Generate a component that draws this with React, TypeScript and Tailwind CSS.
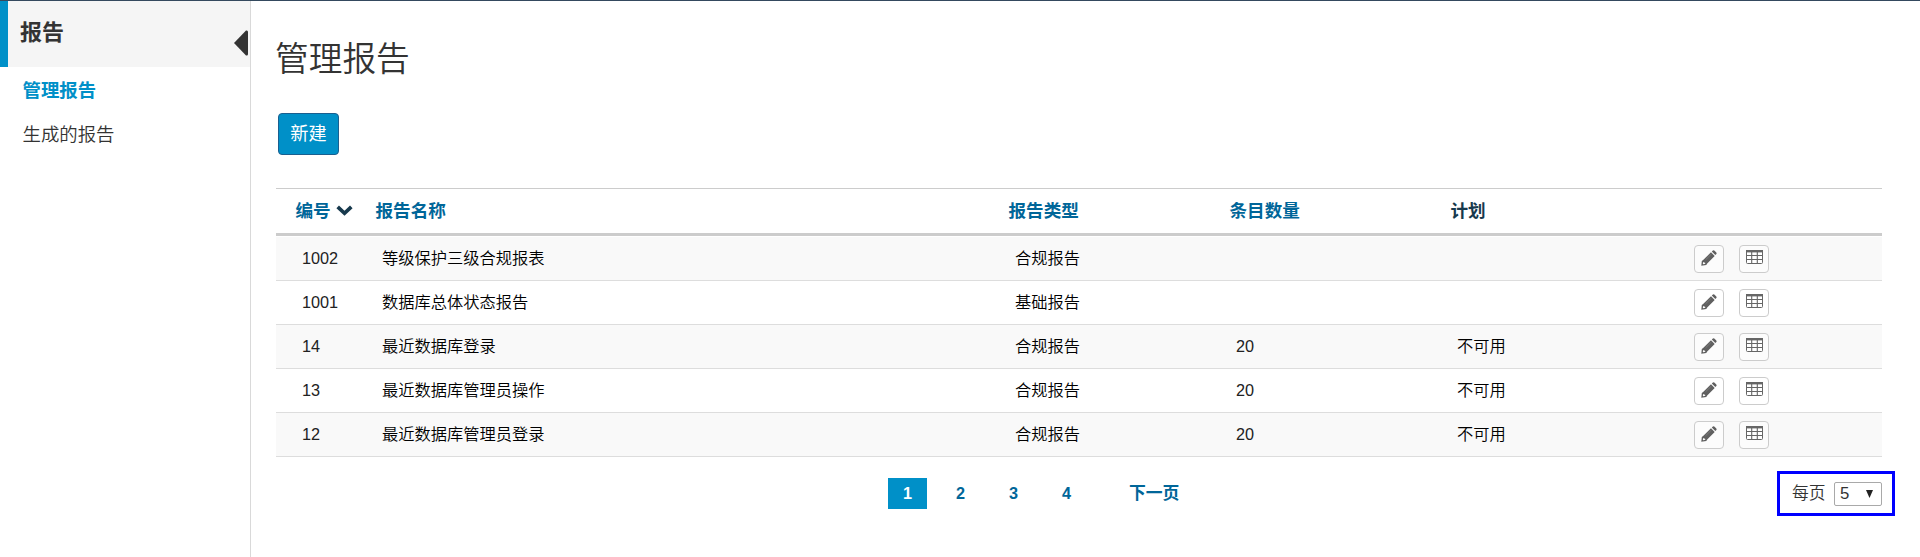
import React from "react";

type Report = { id: string; name: string; type: string; count?: string; plan?: string };

const reports: Report[] = [
  { id: "1002", name: "等级保护三级合规报表", type: "合规报告" },
  { id: "1001", name: "数据库总体状态报告", type: "基础报告" },
  { id: "14", name: "最近数据库登录", type: "合规报告", count: "20", plan: "不可用" },
  { id: "13", name: "最近数据库管理员操作", type: "合规报告", count: "20", plan: "不可用" },
  { id: "12", name: "最近数据库管理员登录", type: "合规报告", count: "20", plan: "不可用" },
];

const columns = "grid grid-cols-[80px_633px_221px_221px_237px_1fr]";

function PencilIcon() {
  return (
    <svg className="-ml-px -mt-[2px] shrink-0" width="16" height="16" viewBox="0 0 16 16" fill="#606060">
      <path d="M10.8 1.6 11.9 .6Q12.8 0 13.6.7L15.3 2.4Q16 3.2 15.4 4L14.3 5.1ZM10 2.3 13.7 6 6.2 13.4 5.3 15 .3 15.7 .8 10.9 2.4 9.8ZM2.2 11.9 1.8 14 2.3 14.3 4.3 13.8 4.1 12.7 3.1 12.4Z" fillRule="evenodd" />
      <path d="M4.6 9.8 10.4 4.1" stroke="#8c8c8c" strokeWidth=".6" />
    </svg>
  );
}

function TableIcon() {
  return (
    <svg className="-mt-[3px] shrink-0" width="17" height="14" viewBox="0 0 17 14" fill="none" stroke="#666">
      <rect x=".5" y=".5" width="16" height="13" rx="1" fill="#fff" />
      <path d="M0 1.2H17" strokeWidth="2.4" />
      <path d="M.5 5.5H16.5M.5 9.5H16.5M5.7 1V14M11.3 1V14" strokeWidth="1.1" />
    </svg>
  );
}

function IconButton({ label, children }: { label: string; children: React.ReactNode }) {
  return (
    <button
      aria-label={label}
      className="flex h-7 w-[30px] items-center justify-center rounded border border-[#ccc] bg-white/50"
    >
      {children}
    </button>
  );
}

function Sidebar() {
  return (
    <aside className="w-[251px] shrink-0 border-r border-[#d9d9d9]">
      <div className="flex h-[66px] items-center justify-between border-l-8 border-[#0090c8] bg-[#f5f5f5] pl-3 pr-[2px]">
        <h2 className="-mt-1 text-[22px] font-bold text-[#333]">报告</h2>
        <svg className="mt-[18px]" width="14" height="26" viewBox="0 0 14 26" fill="#333">
          <path d="M0 13 12 .6Q14 0 14 2V24Q14 26 12 25.4Z" />
        </svg>
      </div>
      <nav className="flex flex-col pt-px pl-[22.5px] text-[18.4px] text-[#333]">
        <a className="flex h-[45px] items-center font-bold text-[#0090c8]">管理报告</a>
        <a className="flex h-11 items-center font-[350]">生成的报告</a>
      </nav>
    </aside>
  );
}

function ReportTable() {
  return (
    <div className="mt-[33px] w-[1606px] border-t border-[#ccc]">
      <div className={`${columns} h-[47px] items-center border-b-[3px] border-[#ccc] pl-[19.5px] text-[17.6px] font-bold text-[#006699]`}>
        <div className="flex items-center gap-[5px]">
          编号
          <svg width="17" height="11" viewBox="0 0 17 11" fill="none" stroke="#17394d" strokeWidth="3.7">
            <path d="M1.7 1.8 8.5 8.3 15.3 1.8" />
          </svg>
        </div>
        <div>报告名称</div>
        <div>报告类型</div>
        <div>条目数量</div>
        <div className="text-[#17394d]">计划</div>
      </div>
      <div className="border-t border-white">
        {reports.map((r) => (
          <div
            key={r.id}
            className={`${columns} h-11 items-center border-b border-[#ddd] pl-[26px] text-[16.25px] font-[350] text-black odd:bg-[#f9f9f9] even:bg-white`}
          >
            <div className="text-[#222]">{r.id}</div>
            <div>{r.name}</div>
            <div>{r.type}</div>
            <div className="text-[#222]">{r.count}</div>
            <div>{r.plan}</div>
            <div className="flex gap-[15px]">
              <IconButton label="编辑"><PencilIcon /></IconButton>
              <IconButton label="查看"><TableIcon /></IconButton>
            </div>
          </div>
        ))}
      </div>
    </div>
  );
}

function Footer() {
  return (
    <div className="mt-[14px] flex h-[45px] w-[1619px] items-center justify-between pl-[612px]">
      <div className="flex items-center gap-[14px] text-[16.25px] font-bold text-[#006699]">
        <span className="flex h-[31px] w-[39px] items-center justify-center bg-[#0090c8] text-white">1</span>
        <span className="w-[39px] text-center">2</span>
        <span className="w-[39px] text-center">3</span>
        <span className="w-[39px] text-center">4</span>
        <span className="pl-[29px] text-[16.8px]">下一页</span>
      </div>
      <div className="flex h-[45px] w-[118px] items-center border-[3px] border-[#0000ff] pl-3 text-[16.8px] font-[350] text-[#333]">
        <span className="w-[42px]">每页</span>
        <span className="flex h-6 w-12 items-center justify-between rounded-xs border border-[#a9a9a9] pl-[5px] pr-[8px]">
          5
          <svg width="7" height="8" viewBox="0 0 7 8" fill="#222"><path d="M0 0H7L3.5 8Z" /></svg>
        </span>
      </div>
    </div>
  );
}

export default function App() {
  return (
    <div className="flex h-[557px] w-[1920px] overflow-hidden border-t border-[#34495e] bg-white font-['Liberation_Sans','Noto_Sans_CJK_SC',sans-serif]">
      <Sidebar />
      <main className="pl-[25px]">
        <h1 className="mt-[34px] -ml-px h-[48px] text-[33.7px] leading-[48px] font-[350] text-[#333]">管理报告</h1>
        <button className="mt-[30px] ml-[2px] flex h-[42px] w-[61px] items-center justify-center rounded border border-[#1a5f8f] bg-[#0090c8] pt-px text-[18.2px] text-white">
          新建
        </button>
        <ReportTable />
        <Footer />
      </main>
    </div>
  );
}
